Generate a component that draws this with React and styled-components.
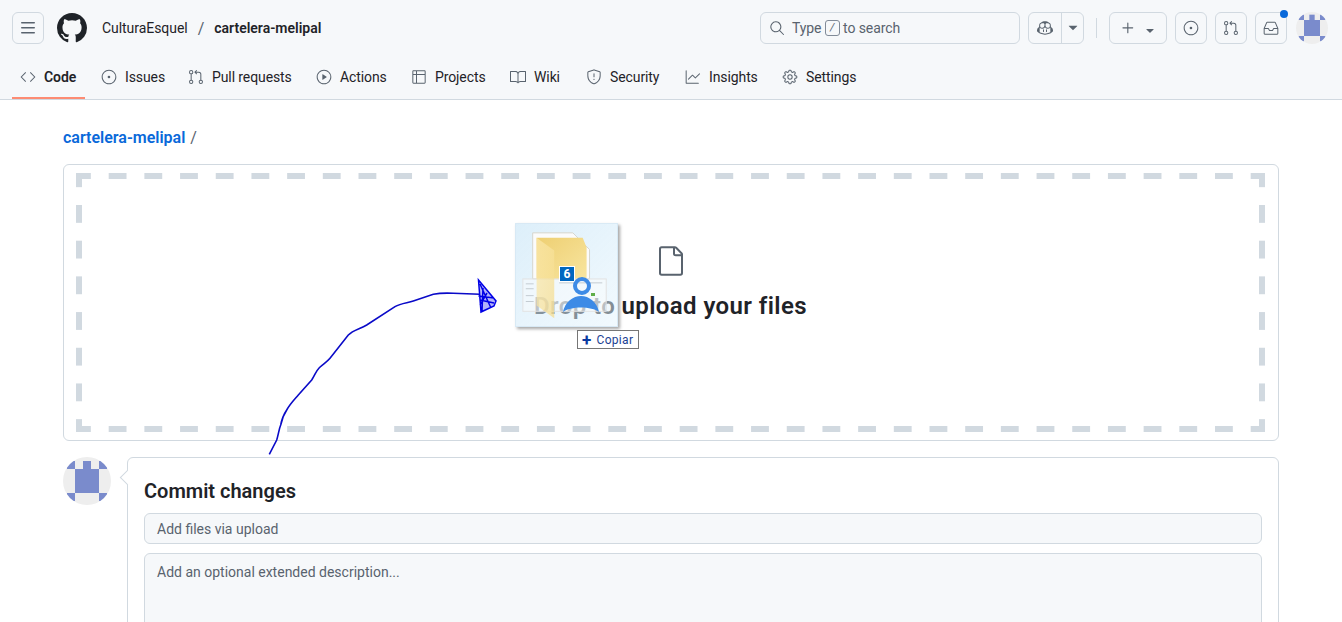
import styled, { createGlobalStyle } from "styled-components";
import {
  GoBook,
  GoCode,
  GoCopilot,
  GoFile,
  GoGear,
  GoGitPullRequest,
  GoGraph,
  GoInbox,
  GoIssueOpened,
  GoPlay,
  GoPlus,
  GoSearch,
  GoShield,
  GoTable,
  GoTriangleDown,
} from "react-icons/go";

const TABS = [
  { label: "Code", icon: GoCode, width: 33, active: true },
  { label: "Issues", icon: GoIssueOpened, width: 39 },
  { label: "Pull requests", icon: GoGitPullRequest, width: 80 },
  { label: "Actions", icon: GoPlay, width: 47 },
  { label: "Projects", icon: GoTable, width: 51 },
  { label: "Wiki", icon: GoBook, width: 28 },
  { label: "Security", icon: GoShield, width: 51 },
  { label: "Insights", icon: GoGraph, width: 49 },
  { label: "Settings", icon: GoGear, width: 50 },
];

function MenuIcon() {
  return (
    <svg width="16" height="16" viewBox="0 0 16 16" fill="currentColor">
      <path d="M1 2.75A.75.75 0 0 1 1.75 2h12.5a.75.75 0 0 1 0 1.5H1.75A.75.75 0 0 1 1 2.75Zm0 5A.75.75 0 0 1 1.75 7h12.5a.75.75 0 0 1 0 1.5H1.75A.75.75 0 0 1 1 7.75ZM1.75 12h12.5a.75.75 0 0 1 0 1.5H1.75a.75.75 0 0 1 0-1.5Z" />
    </svg>
  );
}

function GithubMark() {
  return (
    <svg width="30" height="30" viewBox="0 0 16 16" fill="currentColor">
      <path d="M8 0c4.42 0 8 3.58 8 8a8.013 8.013 0 0 1-5.45 7.59c-.4.08-.55-.17-.55-.38 0-.27.01-1.13.01-2.2 0-.75-.25-1.23-.54-1.48 1.78-.2 3.65-.88 3.65-3.95 0-.88-.31-1.59-.82-2.15.08-.2.36-1.02-.08-2.12 0 0-.67-.22-2.2.82-.64-.18-1.32-.27-2-.27-.68 0-1.36.09-2 .27-1.53-1.03-2.2-.82-2.2-.82-.44 1.1-.16 1.92-.08 2.12-.51.56-.82 1.28-.82 2.15 0 3.06 1.86 3.75 3.64 3.95-.23.2-.44.55-.51 1.07-.46.21-1.61.55-2.33-.66-.15-.24-.6-.83-1.23-.82-.67.01-.27.38.01.53.34.19.73.9.82 1.13.16.45.68 1.31 2.69.94 0 .67.01 1.3.01 1.49 0 .21-.15.45-.55.38A7.995 7.995 0 0 1 0 8c0-4.42 3.58-8 8-8Z" />
    </svg>
  );
}

function Identicon({ size, clipId }) {
  return (
    <AvatarSvg width={size} height={size} viewBox="0 0 48 48">
      <defs>
        <clipPath id={clipId}>
          <circle cx="24" cy="24" r="24" />
        </clipPath>
      </defs>
      <circle cx="24" cy="24" r="24" fill="#eeeeee" />
      <g fill="#7a8bcc" clipPath={`url(#${clipId})`}>
        <rect x="12" y="12" width="24" height="24" />
        <rect x="20" y="4" width="8" height="8" />
        <rect x="4" y="4" width="8" height="8" />
        <rect x="36" y="4" width="8" height="8" />
        <rect x="4" y="36" width="8" height="8" />
        <rect x="36" y="36" width="8" height="8" />
      </g>
    </AvatarSvg>
  );
}

function DragPreview() {
  return (
    <DragTile>
      <TileLayer>
        <svg width="103" height="104" viewBox="0 0 103 104">
          <defs>
            <linearGradient id="folderBack" x1="0" y1="0" x2="1" y2="1">
              <stop offset="0" stopColor="#eecf72" />
              <stop offset="1" stopColor="#f8e59f" />
            </linearGradient>
            <linearGradient id="folderFlap" x1="0" y1="0" x2="1" y2="1">
              <stop offset="0" stopColor="#fbe9ae" />
              <stop offset="1" stopColor="#f5dc8c" />
            </linearGradient>
          </defs>
          <path d="M17 8 H58 L75 25 V55 H17 Z" fill="#fbfbfb" stroke="#d5d5cd" />
          <path d="M21 13 H68 L72 23 V55 H21 Z" fill="url(#folderBack)" />
          <rect x="7" y="55" width="85" height="33" fill="#fdfdfd" fillOpacity="0.45" stroke="#e2e2e2" />
          <path d="M10 60 H18 M10 65 H18 M10 72 H18 M10 78 H18 M44 59 H88" stroke="#c3cbd1" strokeWidth="1" />
          <path d="M21 13 L39 26 V95 L21 82 Z" fill="url(#folderFlap)" fillOpacity="0.72" />
        </svg>
      </TileLayer>
      <TileBadge>6</TileBadge>
      <PersonSvg width="103" height="104" viewBox="0 0 103 104">
        <circle cx="66" cy="62" r="7" fill="none" stroke="#3d8be6" strokeWidth="4" />
        <path d="M47 88 C49 78 57 72 65 72 C73 72 81 78 83 88 C76 82 54 82 47 88 Z" fill="#3d8be6" />
        <rect x="75" y="69" width="4" height="3" fill="#5fae4a" />
      </PersonSvg>
    </DragTile>
  );
}

function Scribble() {
  return (
    <ScribbleSvg width="1342" height="622" viewBox="0 0 1342 622">
      <path
        d="M269.3 454.3 L276.7 440 C278.5 434 279 429 280.7 425 C282 418 284 414 286.7 410 C290 404 294 400 298.3 395 L311.7 380 C315 375 316 371 319.3 367.7 C323 364 327 362 330 358.3 L348.3 335 C353 330 360 329 366.7 325 L395 306.7 C401 303 408 303 413.3 301 L433.3 294.3 C440 293 447 293 453.3 293.3 L480 294.3"
        fill="none"
        stroke="#0a0ac8"
        strokeWidth="1.6"
      />
      <path
        d="M478.5 280 L496 301 L494 306 L481 312 Z M480 284 L491 308 M478.5 296 L494 298 M483 288 L482 311 M487 293 L480 305 M480 300 L494 303"
        fill="rgba(40,40,240,0.35)"
        stroke="#0000e6"
        strokeWidth="1.5"
      />
    </ScribbleSvg>
  );
}

export default function App() {
  return (
    <Page>
      <GlobalStyle />
      <Header>
        <TopBar>
          <IconButton aria-label="menu">
            <MenuIcon />
          </IconButton>
          <Logo>
            <GithubMark />
          </Logo>
          <Owner>CulturaEsquel</Owner>
          <Slash>/</Slash>
          <RepoName>cartelera-melipal</RepoName>
          <TopActions>
            <SearchBox>
              <GoSearch size={16} />
              <SearchText>
                Type <KeyHint>/</KeyHint> to search
              </SearchText>
            </SearchBox>
            <SplitButton>
              <SplitMain>
                <GoCopilot size={16} />
              </SplitMain>
              <SplitCaret>
                <GoTriangleDown size={16} />
              </SplitCaret>
            </SplitButton>
            <Divider />
            <PlusButton>
              <GoPlus size={18} />
              <PlusCaret>
                <GoTriangleDown size={14} />
              </PlusCaret>
            </PlusButton>
            <IconButton>
              <GoIssueOpened size={16} />
            </IconButton>
            <IconButton>
              <GoGitPullRequest size={16} />
            </IconButton>
            <IconButton>
              <GoInbox size={16} />
              <NotifyDot />
            </IconButton>
            <TopAvatar>
              <Identicon size={32} clipId="topAvatarClip" />
            </TopAvatar>
          </TopActions>
        </TopBar>
        <TabNav>
          {TABS.map(({ label, icon: Icon, width, active }) => (
            <Tab key={label} $active={active}>
              <Icon size={16} />
              <TabLabel $width={width}>{label}</TabLabel>
            </Tab>
          ))}
        </TabNav>
      </Header>

      <Main>
        <Breadcrumb>
          <RepoLink>cartelera-melipal</RepoLink>
          <CrumbSlash>/</CrumbSlash>
        </Breadcrumb>

        <DropZone>
          <DashFrame>
            <FileIcon>
              <GoFile size={32} />
            </FileIcon>
            <DropTitle>Drop to upload your files</DropTitle>
            <DragPreview />
            <CopyBadge>
              <CopyPlus>+</CopyPlus>
              Copiar
            </CopyBadge>
          </DashFrame>
        </DropZone>

        <CommitRow>
          <Identicon size={48} clipId="commitAvatarClip" />
          <CommitBox>
            <CommitTitle>Commit changes</CommitTitle>
            <TextInput>Add files via upload</TextInput>
            <TextArea>Add an optional extended description...</TextArea>
          </CommitBox>
        </CommitRow>
      </Main>
      <Scribble />
    </Page>
  );
}

const GlobalStyle = createGlobalStyle`
  * {
    box-sizing: border-box;
  }
  html, body {
    margin: 0;
    height: 100%;
    overflow: hidden;
    background: #fff;
  }
  body {
    font-family: Roboto, "Liberation Sans", sans-serif;
    font-size: 14px;
    color: #1f2328;
  }
`;

const Page = styled.div`
  position: relative;
  height: 622px;
  overflow: hidden;
`;

const Header = styled.header`
  height: 100px;
  background: #f6f8fa;
  border-bottom: 1px solid #d1d9e0;
`;

const TopBar = styled.div`
  display: flex;
  align-items: center;
  height: 56px;
  padding: 12px 14px 12px 12px;
`;

const IconButton = styled.div`
  position: relative;
  display: flex;
  align-items: center;
  justify-content: center;
  width: 32px;
  height: 32px;
  border: 1px solid #d1d9e0;
  border-radius: 6px;
  color: #59636e;
`;

const Logo = styled.div`
  display: flex;
  margin-left: 13px;
  color: #1f2328;
`;

const Owner = styled.span`
  margin-left: 15px;
  letter-spacing: -0.05px;
  color: #1f2328;
`;

const Slash = styled.span`
  margin: 0 10px;
  font-size: 16px;
  color: #59636e;
`;

const RepoName = styled.span`
  font-weight: 600;
  color: #1f2328;
`;

const TopActions = styled.div`
  display: flex;
  align-items: center;
  gap: 8px;
  margin-left: auto;
`;

const TopAvatar = styled.div`
  display: flex;
  margin-left: 1px;
`;

const SearchBox = styled.div`
  display: flex;
  align-items: center;
  gap: 7px;
  width: 260px;
  height: 32px;
  padding: 0 8px;
  border: 1px solid #d1d9e0;
  border-radius: 6px;
  color: #59636e;
`;

const SearchText = styled.span`
  letter-spacing: -0.1px;
  color: #59636e;
`;

const KeyHint = styled.kbd`
  display: inline-block;
  width: 15px;
  height: 16px;
  border: 1px solid #818b98;
  border-radius: 3px;
  font-family: inherit;
  font-size: 11px;
  font-style: italic;
  line-height: 14px;
  text-align: center;
  vertical-align: text-bottom;
`;

const SplitButton = styled.div`
  display: flex;
  width: 56px;
  height: 32px;
  border: 1px solid #d1d9e0;
  border-radius: 6px;
  color: #59636e;
`;

const SplitMain = styled.div`
  display: flex;
  align-items: center;
  justify-content: center;
  width: 33px;
  border-right: 1px solid #d1d9e0;
`;

const SplitCaret = styled.div`
  display: flex;
  align-items: center;
  justify-content: center;
  flex: 1;
`;

const Divider = styled.div`
  width: 1px;
  height: 20px;
  margin: 0 4px;
  background: #d1d9e0;
`;

const PlusButton = styled.div`
  display: flex;
  align-items: center;
  justify-content: center;
  gap: 6px;
  width: 58px;
  height: 32px;
  border: 1px solid #d1d9e0;
  border-radius: 6px;
  color: #59636e;
`;

const PlusCaret = styled.span`
  display: flex;
  margin-top: 5px;
`;

const NotifyDot = styled.span`
  position: absolute;
  top: -3px;
  right: -2px;
  width: 8px;
  height: 8px;
  border-radius: 50%;
  background: #0969da;
`;

const AvatarSvg = styled.svg`
  flex: none;
  display: block;
`;

const TabNav = styled.nav`
  display: flex;
  gap: 8px;
  height: 43px;
  padding: 0 12px;
`;

const Tab = styled.a`
  display: flex;
  align-items: center;
  gap: 8px;
  height: 43px;
  padding: 0 8px;
  color: #1f2328;
  font-weight: ${(props) => (props.$active ? 600 : 400)};
  border-bottom: 2px solid ${(props) => (props.$active ? "#fd8c73" : "transparent")};

  svg {
    flex: none;
    color: #59636e;
  }
`;

const TabLabel = styled.span`
  width: ${(props) => props.$width}px;
  margin-top: 1px;
  letter-spacing: -0.1px;
  white-space: nowrap;
`;

const Main = styled.main`
  padding: 0 63px;
`;

const Breadcrumb = styled.div`
  display: flex;
  align-items: center;
  gap: 5px;
  height: 64px;
  padding-top: 10px;
  font-size: 16px;
`;

const RepoLink = styled.a`
  color: #0969da;
  font-weight: 600;
`;

const CrumbSlash = styled.span`
  color: #59636e;
`;

const DropZone = styled.div`
  height: 277px;
  padding: 8px 13px 8px 12px;
  border: 1px solid #d1d9e0;
  border-radius: 6px;
`;

const DashFrame = styled.div`
  position: relative;
  display: flex;
  flex-direction: column;
  align-items: center;
  height: 100%;
  padding-top: 72px;
  background-image:
    linear-gradient(to right, #d1d9e0 18px, transparent 18px),
    linear-gradient(to right, #d1d9e0 18px, transparent 18px),
    linear-gradient(to bottom, #d1d9e0 18px, transparent 18px),
    linear-gradient(to bottom, #d1d9e0 18px, transparent 18px);
  background-size: 35.7px 6px, 35.7px 6px, 6px 35.7px, 6px 35.7px;
  background-position: -3px 0, -3px 100%, 0 -3.7px, 100% -3.7px;
  background-repeat: repeat-x, repeat-x, repeat-y, repeat-y;
`;

const FileIcon = styled.div`
  display: flex;
  color: #59636e;
`;

const DropTitle = styled.h2`
  margin: 11px 0 0;
  font-size: 24px;
  line-height: 36px;
  font-weight: 600;
  letter-spacing: 0.4px;
  color: #1f2328;
`;

const DragTile = styled.div`
  position: absolute;
  left: 439px;
  top: 50px;
  width: 103px;
  height: 104px;
  border: 1px solid rgba(214, 232, 244, 0.9);
  background: linear-gradient(135deg, rgba(200, 229, 247, 0.62), rgba(228, 244, 253, 0.5));
  box-shadow: 2px 2px 3px rgba(0, 0, 0, 0.35);
`;

const TileLayer = styled.div`
  position: absolute;
  inset: 0;
  display: flex;
`;

const TileBadge = styled.div`
  position: absolute;
  left: 43px;
  top: 42px;
  width: 16px;
  height: 16px;
  background: #0067c0;
  border: 1px solid #fff;
  color: #fff;
  font-size: 12px;
  font-weight: 700;
  line-height: 14px;
  text-align: center;
`;

const PersonSvg = styled.svg`
  position: absolute;
  inset: 0;
`;

const CopyBadge = styled.div`
  position: absolute;
  left: 501px;
  top: 157px;
  display: flex;
  align-items: center;
  gap: 5px;
  height: 19px;
  padding: 0 5px 0 4px;
  background: #fff;
  border: 1px solid #767676;
  font-size: 12px;
  letter-spacing: 0.3px;
  color: #1c3f94;
`;

const CopyPlus = styled.span`
  font-size: 17px;
  line-height: 14px;
  font-weight: 700;
  color: #0a3aa0;
`;

const CommitRow = styled.div`
  display: flex;
  gap: 16px;
  margin-top: 16px;
`;

const CommitBox = styled.div`
  position: relative;
  flex: 1;
  height: 260px;
  padding: 16px;
  border: 1px solid #d1d9e0;
  border-radius: 6px;

  &::before {
    content: "";
    position: absolute;
    left: -6px;
    top: 14px;
    width: 10px;
    height: 10px;
    background: #fff;
    border-left: 1px solid #d1d9e0;
    border-bottom: 1px solid #d1d9e0;
    transform: rotate(45deg);
  }
`;

const CommitTitle = styled.h3`
  margin: 4px 0 9px;
  font-size: 20px;
  line-height: 26px;
  font-weight: 600;
  color: #1f2328;
`;

const TextInput = styled.div`
  display: flex;
  align-items: center;
  height: 31px;
  padding: 1px 12px 0;
  background: #f6f8fa;
  border: 1px solid #d1d9e0;
  border-radius: 6px;
  color: #59636e;
`;

const TextArea = styled.div`
  height: 200px;
  margin-top: 9px;
  padding: 10px 12px;
  background: #f6f8fa;
  border: 1px solid #d1d9e0;
  border-radius: 6px;
  color: #59636e;
`;

const ScribbleSvg = styled.svg`
  position: absolute;
  inset: 0;
  pointer-events: none;
`;
